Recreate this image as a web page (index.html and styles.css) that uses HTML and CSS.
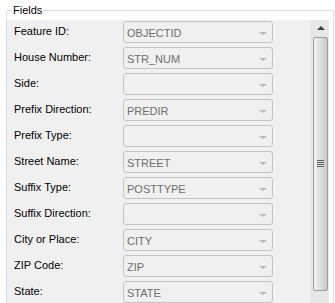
FILE: index.html
```html
<!DOCTYPE html>
<html lang="en">
<head>
    <meta charset="UTF-8">
    <title>Fields</title>
    <link rel="stylesheet" href="styles.css">
</head>
<body>
    <fieldset class="group">
        <legend class="group-title">Fields</legend>
        <div class="pane">
            <div class="rows">
                <div class="row"><span class="label">Feature ID:</span><div class="combo"><span class="value">OBJECTID</span><span class="arrow"></span></div></div>
                <div class="row"><span class="label">House Number:</span><div class="combo"><span class="value">STR_NUM</span><span class="arrow"></span></div></div>
                <div class="row"><span class="label">Side:</span><div class="combo"><span class="value"></span><span class="arrow"></span></div></div>
                <div class="row"><span class="label">Prefix Direction:</span><div class="combo"><span class="value">PREDIR</span><span class="arrow"></span></div></div>
                <div class="row"><span class="label">Prefix Type:</span><div class="combo"><span class="value"></span><span class="arrow"></span></div></div>
                <div class="row"><span class="label">Street Name:</span><div class="combo"><span class="value">STREET</span><span class="arrow"></span></div></div>
                <div class="row"><span class="label">Suffix Type:</span><div class="combo"><span class="value">POSTTYPE</span><span class="arrow"></span></div></div>
                <div class="row"><span class="label">Suffix Direction:</span><div class="combo"><span class="value"></span><span class="arrow"></span></div></div>
                <div class="row"><span class="label">City or Place:</span><div class="combo"><span class="value">CITY</span><span class="arrow"></span></div></div>
                <div class="row"><span class="label">ZIP Code:</span><div class="combo"><span class="value">ZIP</span><span class="arrow"></span></div></div>
                <div class="row"><span class="label">State:</span><div class="combo"><span class="value">STATE</span><span class="arrow"></span></div></div>
            </div>
            <div class="scrollbar">
                <div class="scroll-up"></div>
                <div class="thumb"><span class="grip"></span></div>
            </div>
        </div>
    </fieldset>
</body>
</html>
```

FILE: styles.css
```css
body {
    margin: 0;
    background: #ffffff;
    font-family: "Liberation Sans", Arial, sans-serif;
    font-size: 11px;
    color: #000;
    height: 303px;
    overflow: hidden;
}
.group {
    margin: 3px 1px 0 6px;
    padding: 0 4px 0 0;
    border: 1px solid #d5dfe5;
    border-bottom: none;
    border-radius: 3px 3px 0 0;
    background: #ffffff;
    overflow: hidden;
}
.group-title {
    margin-left: 5px;
    padding: 0 1px;
    font-size: 11px;
    line-height: 14px;
}
.pane {
    display: flex;
    margin-top: 3px;
    height: 286px;
}
.rows {
    flex: 1;
    background: #f0f0f0;
    padding: 1px 0 0 7px;
    overflow: hidden;
}
.row {
    display: flex;
    align-items: flex-start;
    height: 26px;
}
.label {
    width: 109px;
    padding-top: 4px;
}
.combo {
    height: 20px;
    width: 140px;
    border: 1px solid #c3c3c3;
    border-radius: 3px;
    background: #f0f0f0;
    display: flex;
    align-items: center;
    justify-content: space-between;
    padding: 0 5px 0 3px;
}
.value {
    color: #6d6d6d;
    padding-top: 2px;
}
.arrow {
    width: 0;
    height: 0;
    border-left: 4px solid transparent;
    border-right: 4px solid transparent;
    border-top: 3px solid #b8b8b8;
    margin-top: 2px;
}
.scrollbar {
    width: 17px;
    background: #e8e8e8;
    border-left: 1px solid #e2e2e2;
    display: flex;
    flex-direction: column;
    align-items: center;
}
.scroll-up {
    height: 17px;
    width: 17px;
    position: relative;
}
.scroll-up::after {
    content: "";
    position: absolute;
    left: 5px;
    top: 6px;
    border-left: 4px solid transparent;
    border-right: 4px solid transparent;
    border-bottom: 4px solid #404040;
}
.thumb {
    width: 13px;
    height: 252px;
    border: 1px solid #9c9c9c;
    border-radius: 2px;
    background: linear-gradient(to right, #f4f4f4 0%, #e6e6e6 30%, #d4d4d4 70%, #c8c8c8 100%);
    display: flex;
    align-items: center;
    justify-content: center;
}
.grip {
    width: 7px;
    height: 8px;
    background: repeating-linear-gradient(to bottom, #5c5c5c 0 1px, #e0e0e0 1px 2px);
}
```
